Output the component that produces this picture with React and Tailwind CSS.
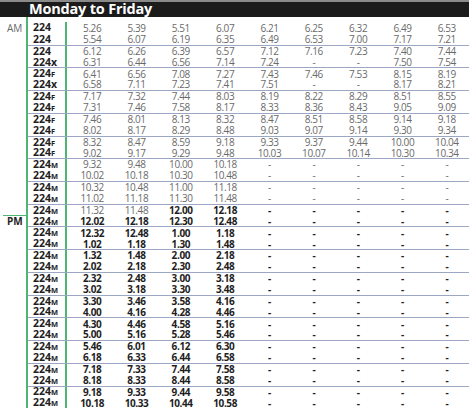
import React from "react"

const am = [
  ["224", "", ["5.26", "5.39", "5.51", "6.07", "6.21", "6.25", "6.32", "6.49", "6.53"]],
  ["224", "", ["5.54", "6.07", "6.19", "6.35", "6.49", "6.53", "7.00", "7.17", "7.21"]],
  ["224", "", ["6.12", "6.26", "6.39", "6.57", "7.12", "7.16", "7.23", "7.40", "7.44"]],
  ["224", "x", ["6.31", "6.44", "6.56", "7.14", "7.24", "-", "-", "7.50", "7.54"]],
  ["224", "F", ["6.41", "6.56", "7.08", "7.27", "7.43", "7.46", "7.53", "8.15", "8.19"]],
  ["224", "x", ["6.58", "7.11", "7.23", "7.41", "7.51", "-", "-", "8.17", "8.21"]],
  ["224", "F", ["7.17", "7.32", "7.44", "8.03", "8.19", "8.22", "8.29", "8.51", "8.55"]],
  ["224", "F", ["7.31", "7.46", "7.58", "8.17", "8.33", "8.36", "8.43", "9.05", "9.09"]],
  ["224", "F", ["7.46", "8.01", "8.13", "8.32", "8.47", "8.51", "8.58", "9.14", "9.18"]],
  ["224", "F", ["8.02", "8.17", "8.29", "8.48", "9.03", "9.07", "9.14", "9.30", "9.34"]],
  ["224", "F", ["8.32", "8.47", "8.59", "9.18", "9.33", "9.37", "9.44", "10.00", "10.04"]],
  ["224", "F", ["9.02", "9.17", "9.29", "9.48", "10.03", "10.07", "10.14", "10.30", "10.34"]],
]

// 224M rows only run as far as the fourth stop
const mTimes = [
  ["9.32", "9.48", "10.00", "10.18"],
  ["10.02", "10.18", "10.30", "10.48"],
  ["10.32", "10.48", "11.00", "11.18"],
  ["11.02", "11.18", "11.30", "11.48"],
  ["11.32", "11.48", "12.00", "12.18"],
  ["12.02", "12.18", "12.30", "12.48"],
  ["12.32", "12.48", "1.00", "1.18"],
  ["1.02", "1.18", "1.30", "1.48"],
  ["1.32", "1.48", "2.00", "2.18"],
  ["2.02", "2.18", "2.30", "2.48"],
  ["2.32", "2.48", "3.00", "3.18"],
  ["3.02", "3.18", "3.30", "3.48"],
  ["3.30", "3.46", "3.58", "4.16"],
  ["4.00", "4.16", "4.28", "4.46"],
  ["4.30", "4.46", "4.58", "5.16"],
  ["5.00", "5.16", "5.28", "5.46"],
  ["5.46", "6.01", "6.12", "6.30"],
  ["6.18", "6.33", "6.44", "6.58"],
  ["7.18", "7.33", "7.44", "7.58"],
  ["8.18", "8.33", "8.44", "8.58"],
  ["9.18", "9.33", "9.44", "9.58"],
  ["10.18", "10.33", "10.44", "10.58"],
]

const rows = [
  ...am,
  ...mTimes.map((t) => ["224", "M", [...t, "-", "-", "-", "-", "-"]]),
]

const PM_ROW = 17

function isBold(r, c, v) {
  if (v === "-") return r >= PM_ROW - 1
  return r >= PM_ROW || (r === PM_ROW - 1 && c >= 2)
}

function Route({ num, suffix }) {
  return (
    <span className="font-bold text-[#1e1e1e] text-[10.5px] leading-none">
      {num}
      {suffix === "x" && <span>x</span>}
      {(suffix === "F" || suffix === "M") && (
        <span className="text-[7.5px]">{suffix}</span>
      )}
    </span>
  )
}

export default function App() {
  return (
    <div
      className="w-[469px] bg-white"
      style={{ fontFamily: '"Open Sans", "Liberation Sans", sans-serif' }}
    >
      <div className="h-[17px] border-t-2 border-[#8a8a8a] bg-[#1b1b1b] flex items-center pl-[29px]">
        <span className="text-white font-bold text-[14.5px] leading-none tracking-[-0.2px]">
          Monday to Friday
        </span>
      </div>

      <div className="flex">
        {/* AM / PM labels */}
        <div className="w-[26px] pt-[5px] flex flex-col">
          {rows.map((_, r) => (
            <div
              key={r}
              className={
                "h-[11.36px] flex items-center text-[10px] leading-none " +
                (r === PM_ROW ? "ml-[3px] border-t border-[#4fb573] pl-[4px]" : "pl-[7px]")
              }
            >
              {r === 0 && <span className="text-[#6a6a6a]">AM</span>}
              {r === PM_ROW && <span className="font-bold text-[#1e1e1e]">PM</span>}
            </div>
          ))}
        </div>

        <div className="flex-1 border-l-2 border-[#4fb573] pt-[5px]">
          {rows.map(([num, suffix, times], r) => (
            <div
              key={r}
              className={
                "h-[11.36px] flex leading-none " +
                (r > 0 && r % 2 === 0 ? "border-t border-[#9ba7c3]" : "")
              }
            >
              <div className="w-[39px] shrink-0 border-r-2 border-[#4fb573] pl-[5px] flex items-center">
                <Route num={num} suffix={suffix} />
              </div>
              <div className="flex-1 grid grid-cols-9 pl-[3px]">
                {times.map((v, c) => (
                  <div
                    key={c}
                    className={
                      "flex items-center justify-center text-[10px] leading-none tracking-[-0.4px] " +
                      (isBold(r, c, v)
                        ? "font-bold text-[#1e1e1e]"
                        : "text-[#6a6a6a]")
                    }
                  >
                    {v}
                  </div>
                ))}
              </div>
            </div>
          ))}
        </div>
      </div>
    </div>
  )
}
